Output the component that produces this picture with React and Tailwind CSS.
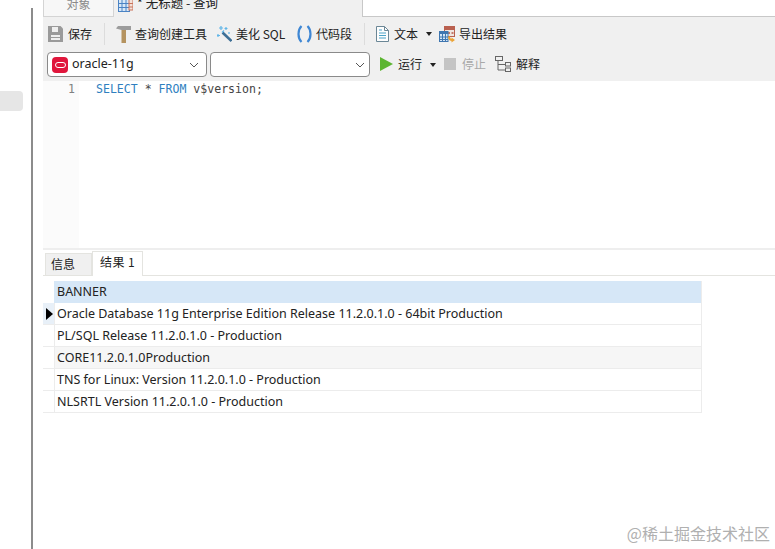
import React from 'react';

const cjk = { fontFamily: '"Noto Sans CJK SC", "Noto Sans", sans-serif' };

function SaveIcon() {
  return (
    <svg width="15" height="16" viewBox="0 0 15 16">
      <path d="M0 0h12.5L15 2.5V16H0z" fill="#9a9a9a" />
      <rect x="4" y="1" width="6" height="5" fill="#efefef" />
      <rect x="3" y="9" width="9" height="2" fill="#efefef" />
      <rect x="3" y="12" width="9" height="2" fill="#efefef" />
    </svg>
  );
}

function HammerIcon() {
  return (
    <svg width="15" height="18" viewBox="0 0 15 18">
      <path d="M2 1h13v4H5.5L0 3.5z" fill="#9c9c9c" />
      <path d="M5.5 5h4.5v13H5.5z" fill="#b5935f" />
    </svg>
  );
}

function WandIcon() {
  return (
    <svg width="15" height="16" viewBox="0 0 15 16">
      <path d="M5.5 6.5l9 8.5" stroke="#3d6f96" strokeWidth="2.6" />
      <path d="M4 0v4M2 2h4M1 8v3M0 9.5h3M9 1v3M7.5 2.5h3M7 4.5L5 6.5M12 6v2" stroke="#62b6e8" strokeWidth="1.2" />
    </svg>
  );
}

function BracesIcon() {
  return (
    <svg width="15" height="18" viewBox="0 0 15 18" fill="none">
      <path d="M4.5 1C.5 5 .5 13 4.5 17" stroke="#3f87d4" strokeWidth="2.2" />
      <path d="M10.5 1c4 4 4 12 0 16" stroke="#3f87d4" strokeWidth="2.2" />
    </svg>
  );
}

function DocIcon() {
  return (
    <svg width="13" height="16" viewBox="0 0 13 16" fill="none">
      <path d="M.5.5h8l4 4v11H.5z" fill="#fdfdfd" stroke="#6b8796" />
      <path d="M8.5.5v4h4" stroke="#6b8796" />
      <path d="M3 4h3M3 7h7M3 9.5h7M3 12h7" stroke="#4aa3c8" />
    </svg>
  );
}

function TableIcon() {
  return (
    <svg width="15" height="14" viewBox="0 0 15 14">
      <rect x="0.5" y="1.5" width="11" height="12" fill="#d8e8f8" stroke="#4b83c4" />
      <path d="M0 5.5h12M0 9.5h12M4 1v13M8 1v13" stroke="#4b83c4" />
      <rect x="11" y="1" width="4" height="11" fill="#f3e2da" stroke="#c9745c" />
      <path d="M11 5.5h4M11 9h4" stroke="#c9745c" />
    </svg>
  );
}

function ExportIcon() {
  return (
    <svg width="16" height="17" viewBox="0 0 16 17" fill="none">
      <rect x="5.5" y="0.5" width="10" height="10" fill="#efe4df" stroke="#b9604f" />
      <path d="M5 2.5h11" stroke="#b9604f" strokeWidth="3" />
      <path d="M9 6h2v2H9zM12.5 6h2v2h-2z" fill="#c47a6a" />
      <rect x="0.5" y="5.5" width="8.5" height="10" fill="#d5e5f5" stroke="#3f76b0" />
      <path d="M0 7h9" stroke="#3f76b0" strokeWidth="2" />
      <path d="M0 11h9M0 13.5h9M3.5 6v10M6.5 6v10" stroke="#3f76b0" />
      <path d="M10 10.5c0 2.5 1 3.5 3.5 3.5" stroke="#eba336" strokeWidth="2" />
      <path d="M12.5 11.5L16 14l-3.5 2.5z" fill="#eba336" />
    </svg>
  );
}

function ExplainIcon() {
  return (
    <svg width="16" height="16" viewBox="0 0 16 16" fill="none" stroke="#666">
      <rect x="0.5" y="0.5" width="7" height="4" />
      <rect x="10.5" y="6.5" width="5" height="3.5" />
      <rect x="10.5" y="12" width="5" height="3.5" />
      <path d="M3 5v9h7M3 8.5h7" />
    </svg>
  );
}

function Chevron() {
  return (
    <svg width="10" height="6" viewBox="0 0 10 6" fill="none">
      <path d="M1 1l4 4 4-4" stroke="#555" strokeWidth="1" />
    </svg>
  );
}

function Caret() {
  return <span className="block h-0 w-0 border-x-[3px] border-t-[4px] border-x-transparent border-t-[#222]" />;
}

function Label({ children, className = 'text-[#222]' }) {
  return (
    <span className={`block pb-px text-[12px] leading-none whitespace-nowrap ${className}`} style={cjk}>
      {children}
    </span>
  );
}

const rows = [
  'Oracle Database 11g Enterprise Edition Release 11.2.0.1.0 - 64bit Production',
  'PL/SQL Release 11.2.0.1.0 - Production',
  'CORE11.2.0.1.0Production',
  'TNS for Linux: Version 11.2.0.1.0 - Production',
  'NLSRTL Version 11.2.0.1.0 - Production',
];

export default function App() {
  return (
    <div className="relative flex h-[549px] w-[775px] overflow-hidden bg-white" style={{ fontFamily: '"Noto Sans", "Noto Sans CJK SC", sans-serif' }}>
      {/* left nav strip */}
      <div className="w-[31px] shrink-0 pt-[91px]">
        <div className="h-5 w-[23px] rounded-r-sm bg-[#e6e6e6]" />
      </div>
      <div className="mt-[8px] w-[2px] shrink-0 bg-[#8c8c8c]" />
      <div className="w-[10px] shrink-0" />

      <div className="flex min-w-0 flex-1 flex-col">
        {/* tabs, the screenshot cuts them off at the top */}
        <div className="flex h-[17px]">
          <div className="flex h-[17px] w-[71px] items-end justify-center overflow-hidden border-x border-b border-[#d4d4d4] bg-[#f7f7f7]">
            <span className="pb-[6px] text-[12px] leading-none text-[#8a8a8a]" style={cjk}>对象</span>
          </div>
          <div className="flex h-[17px] w-[249px] items-start gap-[4px] overflow-hidden border-r border-[#c8c8c8] bg-[#f0f0f0] pl-[4px]">
            <span className="mt-[-2px] block"><TableIcon /></span>
            <span className="mt-[-3px] block text-[12.5px] leading-none whitespace-nowrap text-[#222]" style={cjk}>* 无标题 - 查询</span>
          </div>
          <div className="h-[17px] flex-1 border-b border-[#c8c8c8] bg-white" />
        </div>

        {/* toolbar 1 */}
        <div className="flex h-[31px] items-center bg-[#f0f0f0] pl-[5px] pt-[3px]">
          <SaveIcon />
          <span className="ml-[5px]"><Label>保存</Label></span>
          <div className="ml-[12px] h-[22px] w-px bg-[#dcdcdc]" />
          <span className="ml-[11px]"><HammerIcon /></span>
          <span className="ml-[4px]"><Label>查询创建工具</Label></span>
          <span className="ml-[10px]"><WandIcon /></span>
          <span className="ml-[4px] w-[51px]"><Label>美化 SQL</Label></span>
          <span className="ml-[10px]"><BracesIcon /></span>
          <span className="ml-[4px]"><Label>代码段</Label></span>
          <div className="ml-[12px] h-[22px] w-px bg-[#dcdcdc]" />
          <span className="ml-[11px]"><DocIcon /></span>
          <span className="ml-[5px]"><Label>文本</Label></span>
          <span className="ml-[8px]"><Caret /></span>
          <span className="ml-[7px]"><ExportIcon /></span>
          <span className="ml-[4px]"><Label>导出结果</Label></span>
        </div>

        {/* toolbar 2 */}
        <div className="flex h-[33px] items-center bg-[#f0f0f0] pl-[4px]">
          <div className="flex h-[25px] w-[160px] items-center justify-between rounded-sm border border-[#8a8a8a] bg-white pl-[4px] pr-[7px]">
            <div className="flex items-center gap-[4px]">
              <span className="flex h-[16px] w-[16px] items-center justify-center rounded-sm bg-[#e0163c]">
                <span className="h-[6px] w-[11px] rounded-full border border-white" />
              </span>
              <span className="text-[12.5px] leading-none text-[#222]">oracle-11g</span>
            </div>
            <Chevron />
          </div>
          <div className="ml-[3px] flex h-[25px] w-[160px] items-center justify-end rounded-sm border border-[#8a8a8a] bg-white pr-[4px]">
            <Chevron />
          </div>
          <svg className="ml-[10px] mb-px" width="13" height="14" viewBox="0 0 13 14">
            <path d="M0 0l13 7-13 7z" fill="#5cb531" />
          </svg>
          <span className="ml-[5px]"><Label>运行</Label></span>
          <span className="ml-[8px]"><Caret /></span>
          <div className="ml-[8px] mb-px h-3 w-3 bg-[#c4c4c4]" />
          <span className="ml-[6px]"><Label className="text-[#a8a8a8]">停止</Label></span>
          <span className="ml-[9px] mb-px"><ExplainIcon /></span>
          <span className="ml-[5px]"><Label>解释</Label></span>
        </div>

        {/* editor */}
        <div className="flex h-[167px] bg-white">
          <div className="w-[36px] bg-[#fbfbfb] pr-[4px] pt-px text-right font-['DejaVu_Sans_Mono',monospace] text-[11.5px] leading-[15px] text-[#808080]">1</div>
          <div className="pl-[17px] pt-px font-['DejaVu_Sans_Mono',monospace] text-[11.55px] leading-[15px] text-[#444]">
            <span className="text-[#2f7fbf]">SELECT</span> * <span className="text-[#2f7fbf]">FROM</span> v$version;
          </div>
        </div>

        {/* splitter */}
        <div className="h-[2px] bg-[#eeeeee]" />

        {/* result tabs */}
        <div className="flex h-[26px] items-end border-b border-[#e4e4e0] bg-white">
          <div className="ml-[2px] flex h-[22px] w-[47px] items-center justify-start border border-b-0 border-[#e4e4e0] bg-[#f0f0f0] pb-px pl-[5px] text-[12px] leading-none text-[#222]" style={cjk}>信息</div>
          <div className="relative top-px flex h-[25px] w-[51px] items-center justify-center border-x border-t border-[#e4e4e0] bg-white pb-1 text-[12px] leading-none tracking-[0.4px] whitespace-nowrap text-[#222]" style={cjk}>结果 1</div>
        </div>

        {/* grid */}
        <div className="mt-[5px] flex">
          <div className="w-[11px] shrink-0">
            <div className="h-[22px]" />
            <div className="flex h-[22px] items-center border-b border-[#ececec] bg-[#e8f0f8] pl-[3px]">
              <span className="h-0 w-0 border-y-[6px] border-l-[7px] border-y-transparent border-l-black" />
            </div>
            {rows.slice(1).map((r) => (
              <div key={r} className="h-[22px] border-b border-[#ececec]" />
            ))}
          </div>
          <div className="w-[648px] border-r border-[#ececec]">
            <div className="flex h-[22px] items-center bg-[#d6e7f7] pl-[3px] text-[12.5px] text-[#222]">BANNER</div>
            {rows.map((r, i) => (
              <div
                key={r}
                className={`flex h-[22px] items-center border-b border-l border-[#ececec] pl-[2px] pt-[2px] text-[12.5px] text-[#222] ${i === 2 ? 'bg-[#f6f6f6]' : 'bg-white'}`}
              >
                {r}
              </div>
            ))}
          </div>
        </div>
      </div>

      {/* watermark */}
      <div className="absolute bottom-[8px] right-[5px] text-[16px] leading-none text-[#b0b0b0]" style={{ fontFamily: '"Noto Sans CJK SC", sans-serif' }}>
        @稀土掘金技术社区
      </div>
    </div>
  );
}
